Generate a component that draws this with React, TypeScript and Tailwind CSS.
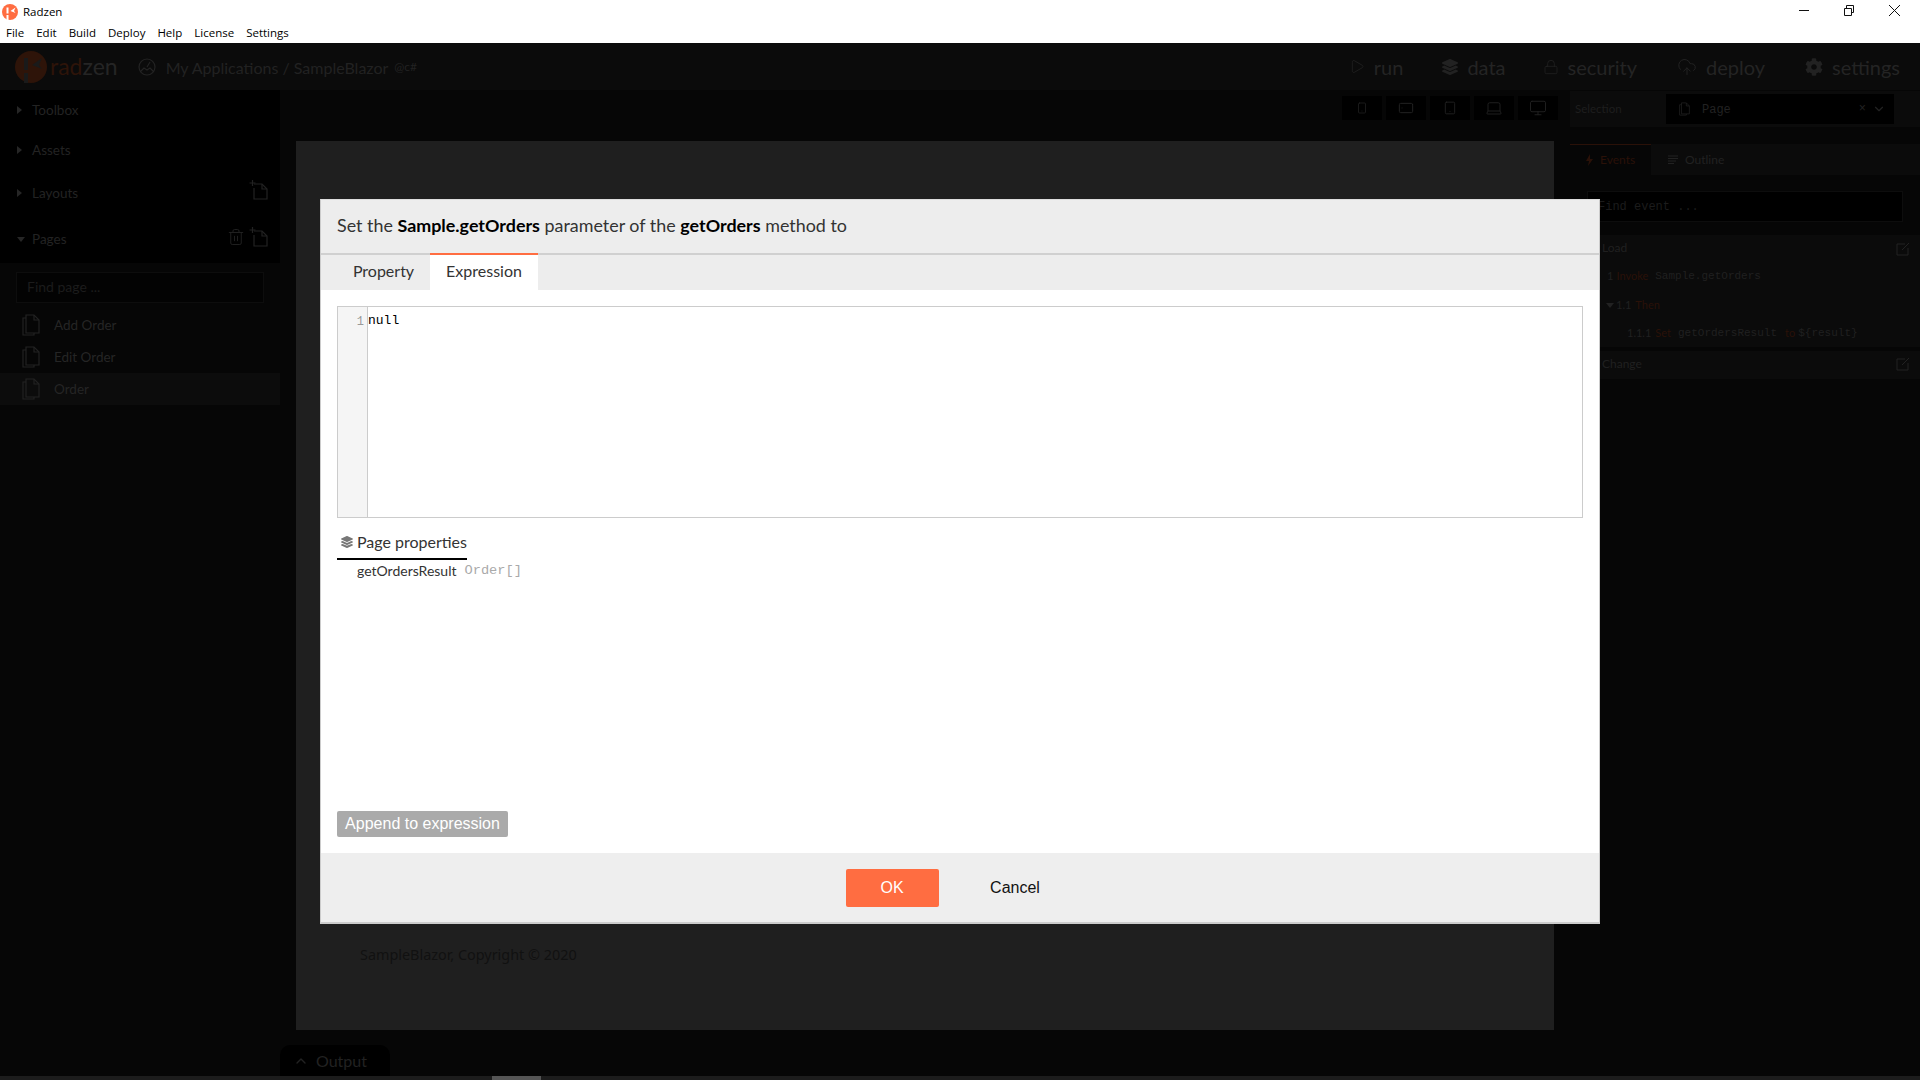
import { FaCog, FaLayerGroup } from "react-icons/fa";
import { ChevronDown, ChevronUp, CloudUpload, Laptop, Lock, Monitor, Play, Smartphone, Tablet, Trash2 } from "lucide-react";

const Logo = ({ size, dim }: { size: number; dim?: boolean }) => (
  <svg width={size} height={size} viewBox="0 0 32 32">
    <circle cx="16" cy="16" r="16" fill={dim ? "#2e1409" : "#ff6d41"} />
    <rect x="9" y="7" width="4" height="12" fill={dim ? "#1a1a1a" : "#fff"} />
    <rect x="9" y="22" width="4" height="10" fill={dim ? "#1a1a1a" : "#fff"} />
    <path d="M17 14 L27 7 L24 14 L27 18 Z" fill={dim ? "#1a1a1a" : "#fff"} />
  </svg>
);

const NewFile = () => (
  <svg width="20" height="20" viewBox="0 0 20 20" fill="none" stroke="#222" strokeWidth="1.2">
    <path d="M5 4h8l5 5v10H5V8" />
    <path d="M13 4v5h5" />
    <path d="M0.5 3h6M3.5 0v6" />
  </svg>
);

const PageIcon = ({ small }: { small?: boolean }) => (
  <svg width={small ? 11 : 18} height={small ? 14 : 22} viewBox="0 0 18 22" fill="none" stroke="#222" strokeWidth="1.2">
    <path d="M4 1h8l5 5v13H4z" />
    <path d="M12 1v5h5" />
    <path d="M4 4H1v17h11v-2" />
  </svg>
);

const EditIcon = () => (
  <svg width="14" height="14" viewBox="0 0 14 14" fill="none" stroke="#222" strokeWidth="1">
    <path d="M9 2H1v11h11V6" />
    <path d="M6 8l7-7" />
  </svg>
);

const Section = ({ name, open, children }: { name: string; open?: boolean; children?: React.ReactNode }) => (
  <div className="flex items-center h-full pl-[17px] pr-[11px]">
    <span className={open ? "w-0 h-0 border-x-[4px] border-x-transparent border-t-[5px] border-t-[#262626] mr-[7px]" : "w-0 h-0 border-y-[4px] border-y-transparent border-l-[5px] border-l-[#262626] mr-[10px]"} />
    <span className="text-[13.5px] text-[#232323]">{name}</span>
    <div className="ml-auto flex gap-[4px] items-center -mt-[6px]">{children}</div>
  </div>
);

const Page = ({ name, active }: { name: string; active?: boolean }) => (
  <div className={`flex items-center h-[32px] pl-[22px] ${active ? "bg-[#0c0c0c]" : ""}`}>
    <PageIcon />
    <span className="ml-[14px] text-[13.5px] text-[#252525]">{name}</span>
  </div>
);

const NavItem = ({ icon, label, className }: { icon: React.ReactNode; label: string; className?: string }) => (
  <div className={`flex items-center gap-[9px] ${className ?? ""}`}>
    {icon}
    <span className="text-[20px] leading-none text-[#242424]">{label}</span>
  </div>
);

const DeviceButton = ({ children }: { children: React.ReactNode }) => (
  <div className="w-[40px] h-[24px] bg-[#000] flex items-center justify-center">{children}</div>
);

const Dialog = () => (
  <div className="absolute left-[320px] top-[199px] w-[1280px] h-[725px] bg-white flex flex-col border-x border-[#ccc] border-t border-t-[#ddd] border-b-2 border-b-[#ccc] font-['Lato',sans-serif]">
    <div className="h-[55px] bg-[#ededed] border-b-2 border-[#d0d0d0] flex items-center pl-[16px] pb-[2px] text-[17.9px] text-[#333] shrink-0">
      <span>
        Set the <b className="font-bold text-black">Sample.getOrders</b> parameter of the <b className="font-bold text-black">getOrders</b> method to
      </span>
    </div>
    <div className="h-[35px] bg-[#ededed] flex shrink-0 text-[16px] text-[#333]">
      <div className="w-[109px] flex items-center justify-center pl-[16px] pb-[4px]">Property</div>
      <div className="w-[108px] bg-white border-t-2 border-[#ff6d41] -mt-[2px] flex items-center justify-center pb-[4px]">Expression</div>
    </div>
    <div className="flex-1 flex flex-col px-[16px] pt-[16px] min-h-0">
      <div className="h-[212px] border border-[#ccc] flex shrink-0">
        <div className="w-[30px] bg-[#f5f5f5] border-r border-[#ccc] text-right pr-[3px] pt-[6px] text-[12px] text-[#999] font-['Liberation_Mono',monospace]">1</div>
        <div className="pt-[6px] text-[13px] leading-[15px] text-black font-['Liberation_Mono',monospace]">null</div>
      </div>
      <div className="mt-[14px] w-[130px] h-[28px] border-b-2 border-black flex items-center gap-[4px] pl-[4px] pb-[6px] text-[16px] text-[#333] shrink-0 whitespace-nowrap">
        <FaLayerGroup className="w-[12px] h-[12px] text-[#777]" />
        <span>Page properties</span>
      </div>
      <div className="mt-[1px] pl-[20px] flex items-center gap-[8px] text-[14px] text-[#333] h-[18px] shrink-0">
        <span>getOrdersResult</span>
        <span className="mt-[2px] text-[13.7px] text-[#aaa] font-['Liberation_Mono',monospace]">Order[]</span>
      </div>
      <div className="mt-auto mb-[16px] w-[171px] h-[26px] bg-[#aaa] rounded-[2px] text-white flex items-center justify-center text-[16px] font-['Liberation_Sans',sans-serif] shrink-0">
        Append to expression
      </div>
    </div>
    <div className="h-[69px] bg-[#eee] flex items-start justify-center pt-[16px] pl-[14px] shrink-0 font-['Liberation_Sans',sans-serif] text-[16px]">
      <div className="w-[93px] h-[38px] bg-[#ff6d41] rounded-[2px] text-white flex items-center justify-center">OK</div>
      <div className="w-[150px] h-[38px] flex items-center justify-center pl-[3px] text-[#111]">Cancel</div>
    </div>
  </div>
);

export default function App() {
  return (
    <div className="relative w-[1920px] h-[1080px] overflow-hidden flex flex-col bg-[#060606] font-['Lato',sans-serif]">
      {/* title bar */}
      <div className="h-[43px] bg-white shrink-0 relative font-['Open_Sans',sans-serif] text-black">
        <div className="h-[23px] flex items-center pl-[2px]">
          <Logo size={16} />
          <span className="ml-[5px] text-[11.5px]">Radzen</span>
        </div>
        <div className="h-[20px] flex items-center pl-[6px] gap-[12px] text-[11.5px]">
          {["File", "Edit", "Build", "Deploy", "Help", "License", "Settings"].map((m) => (
            <span key={m}>{m}</span>
          ))}
        </div>
        <div className="absolute top-0 right-[3px] flex">
          <svg width="45" height="21" viewBox="0 0 45 21" stroke="#111"><path d="M18 10.5h10" /></svg>
          <svg width="45" height="21" viewBox="0 0 45 21" fill="none" stroke="#111"><path d="M18.5 8.5h7v7h-7zM20.5 8.5v-3h7v7h-2" /></svg>
          <svg width="46" height="21" viewBox="0 0 46 21" stroke="#111"><path d="M18 5l11 11M29 5L18 16" /></svg>
        </div>
      </div>

      {/* top nav */}
      <div className="h-[47px] bg-[#0b0b0b] flex items-center shrink-0 pl-[15px] pr-[20px]">
        <Logo size={32} dim />
        <span className="ml-[3px] text-[23px] text-[#2e1409]">rad</span>
        <span className="text-[23px] text-[#252525]">zen</span>
        <svg className="ml-[20px]" width="18" height="18" viewBox="0 0 18 18" fill="none" stroke="#232323" strokeWidth="1.2">
          <circle cx="9" cy="9" r="8" />
          <path d="M9 9l3-5M2 14l4-4 3 2 3-2 4 4" />
        </svg>
        <span className="ml-[10px] mt-[2px] text-[16px] text-[#222]">My Applications / SampleBlazor</span>
        <span className="ml-[6px] mt-[1px] text-[12px] text-[#222]">@c#</span>
        <div className="ml-auto flex items-center">
          <NavItem icon={<Play className="w-[16px] h-[17px] text-[#222]" strokeWidth={1.2} />} label="run" />
          <NavItem className="ml-[39px]" icon={<FaLayerGroup className="w-[16px] h-[18px] text-[#222]" />} label="data" />
          <NavItem className="ml-[37px]" icon={<Lock className="w-[16px] h-[20px] text-[#222]" strokeWidth={1.2} />} label="security" />
          <NavItem className="ml-[40px]" icon={<CloudUpload className="w-[20px] h-[20px] text-[#222]" strokeWidth={1.2} />} label="deploy" />
          <NavItem className="ml-[40px]" icon={<FaCog className="w-[18px] h-[18px] text-[#222]" />} label="settings" />
        </div>
      </div>

      <div className="flex-1 flex min-h-0">
        {/* left sidebar */}
        <div className="w-[280px] shrink-0 flex flex-col">
          <div className="h-[173px] bg-black flex flex-col">
            <div className="h-[40px]"><Section name="Toolbox" /></div>
            <div className="h-[40px]"><Section name="Assets" /></div>
            <div className="h-[46px]"><Section name="Layouts"><NewFile /></Section></div>
            <div className="h-[47px]">
              <Section name="Pages" open>
                <Trash2 className="w-[18px] h-[20px] text-[#222]" strokeWidth={1.2} />
                <NewFile />
              </Section>
            </div>
          </div>
          <div className="mx-[16px] mt-[9px] h-[31px] bg-[#030303] border border-[#0d0d0d] flex items-center pl-[10px] pb-[2px] text-[14px] text-[#1c1c1c]">Find page ...</div>
          <div className="mt-[6px]">
            <Page name="Add Order" />
            <Page name="Edit Order" />
            <Page name="Order" active />
          </div>
        </div>

        {/* center */}
        <div className="w-[1290px] shrink-0 flex flex-col pl-[16px] pr-[16px]">
          <div className="h-[51px] flex items-start justify-end gap-[4px] pt-[6px] -mr-[4px] shrink-0">
            <DeviceButton><Smartphone className="w-[12px] h-[18px] text-[#222]" strokeWidth={1.5} /></DeviceButton>
            <DeviceButton><Smartphone className="w-[16px] h-[16px] rotate-90 text-[#222]" strokeWidth={1.5} /></DeviceButton>
            <DeviceButton><Tablet className="w-[14px] h-[18px] text-[#222]" strokeWidth={1.5} /></DeviceButton>
            <DeviceButton><Laptop className="w-[20px] h-[18px] text-[#222]" strokeWidth={1.2} /></DeviceButton>
            <DeviceButton><Monitor className="w-[20px] h-[18px] text-[#222]" strokeWidth={1.2} /></DeviceButton>
          </div>
          <div className="h-[889px] bg-[#1f1f1f] flex flex-col justify-end shrink-0">
            <div className="pl-[64px] pb-[64px] text-[14.4px] text-[#111] font-['Noto_Sans',sans-serif]">SampleBlazor, Copyright © 2020</div>
          </div>
          <div className="flex-1 -ml-[16px] flex items-start pt-[15px]">
            <div className="w-[110px] h-[31px] bg-black rounded-t-[10px] flex items-center pl-[13px] gap-[7px] text-[#222] text-[16px]">
              <ChevronUp className="w-[16px] h-[16px]" />
              Output
            </div>
          </div>
        </div>

        {/* right panel */}
        <div className="flex-1 flex flex-col pt-[1px] min-w-0">
          <div className="h-[36px] bg-[#0b0b0b] flex items-center pl-[5px] shrink-0">
            <span className="w-[91px] text-[11.5px] text-[#1e1e1e]">Selection</span>
            <div className="w-[228px] h-[30px] bg-black flex items-center pl-[13px] pr-[8px] font-['Liberation_Mono',monospace] text-[12px] text-[#222]">
              <PageIcon small />
              <span className="ml-[12px] mt-[1px]">Page</span>
              <span className="ml-auto">×</span>
              <ChevronDown className="ml-[6px] w-[14px] h-[14px]" />
            </div>
          </div>
          <div className="mt-[17px] h-[31px] bg-[#0b0b0b] flex shrink-0 text-[12px]">
            <div className="w-[81px] bg-[#060606] border-t border-[#2a1108] flex items-center pl-[16px] gap-[7px] text-[#2a1108]">
              <svg width="7" height="12" viewBox="0 0 7 12" fill="#2a1108"><path d="M4 0L0 7h3l-1 5 5-7H4z" /></svg>
              Events
            </div>
            <div className="flex items-center pl-[17px] gap-[7px] text-[#222]">
              <svg width="10" height="10" viewBox="0 0 10 10" stroke="#222"><path d="M0 1h10M0 3.5h10M0 6h8M0 8.5h6" /></svg>
              Outline
            </div>
          </div>
          <div className="mx-[17px] mt-[16px] h-[31px] bg-black border border-[#0d0d0d] flex items-center pl-[10px] font-['Liberation_Mono',monospace] text-[12px] text-[#1c1c1c] shrink-0">Find event ...</div>
          <div className="mt-[13px] bg-[#0b0b0b] h-[112px] shrink-0 text-[11px] text-[#202020]">
            <div className="h-[27px] flex items-center justify-between pl-[32px] pr-[10px]"><span className="text-[12px] -mt-[2px]">Load</span><EditIcon /></div>
            <div className="h-[29px] flex items-center pl-[37px]">
              <span>1</span><span className="ml-[3px] text-[#2a1108]">Invoke</span>
              <span className="ml-[7px] font-['Liberation_Mono',monospace]">Sample.getOrders</span>
            </div>
            <div className="h-[28px] flex items-center pl-[36px]">
              <span className="w-0 h-0 border-x-[4px] border-x-transparent border-t-[5px] border-t-[#222] mr-[2px]" />
              <span>1.1</span><span className="ml-[4px] text-[#2a1108]">Then</span>
            </div>
            <div className="h-[28px] flex items-center pl-[57px]">
              <span>1.1.1</span><span className="ml-[4px] text-[#2a1108]">Set</span>
              <span className="ml-[7px] font-['Liberation_Mono',monospace]">getOrdersResult</span>
              <span className="ml-[8px] text-[#2a1108]">to</span>
              <span className="ml-[3px] font-['Liberation_Mono',monospace]">{"${result}"}</span>
            </div>
          </div>
          <div className="mt-[4px] h-[28px] bg-[#0b0b0b] flex items-center justify-between pl-[32px] pr-[10px] pb-[2px] text-[12px] text-[#202020] shrink-0">
            <span>Change</span><EditIcon />
          </div>
        </div>
      </div>

      {/* bottom scrollbar */}
      <div className="absolute bottom-0 left-0 right-0 h-[4px] bg-[#1c1c1c]">
        <div className="absolute left-[492px] w-[49px] h-full bg-[#555]" />
      </div>

      <Dialog />
    </div>
  );
}
